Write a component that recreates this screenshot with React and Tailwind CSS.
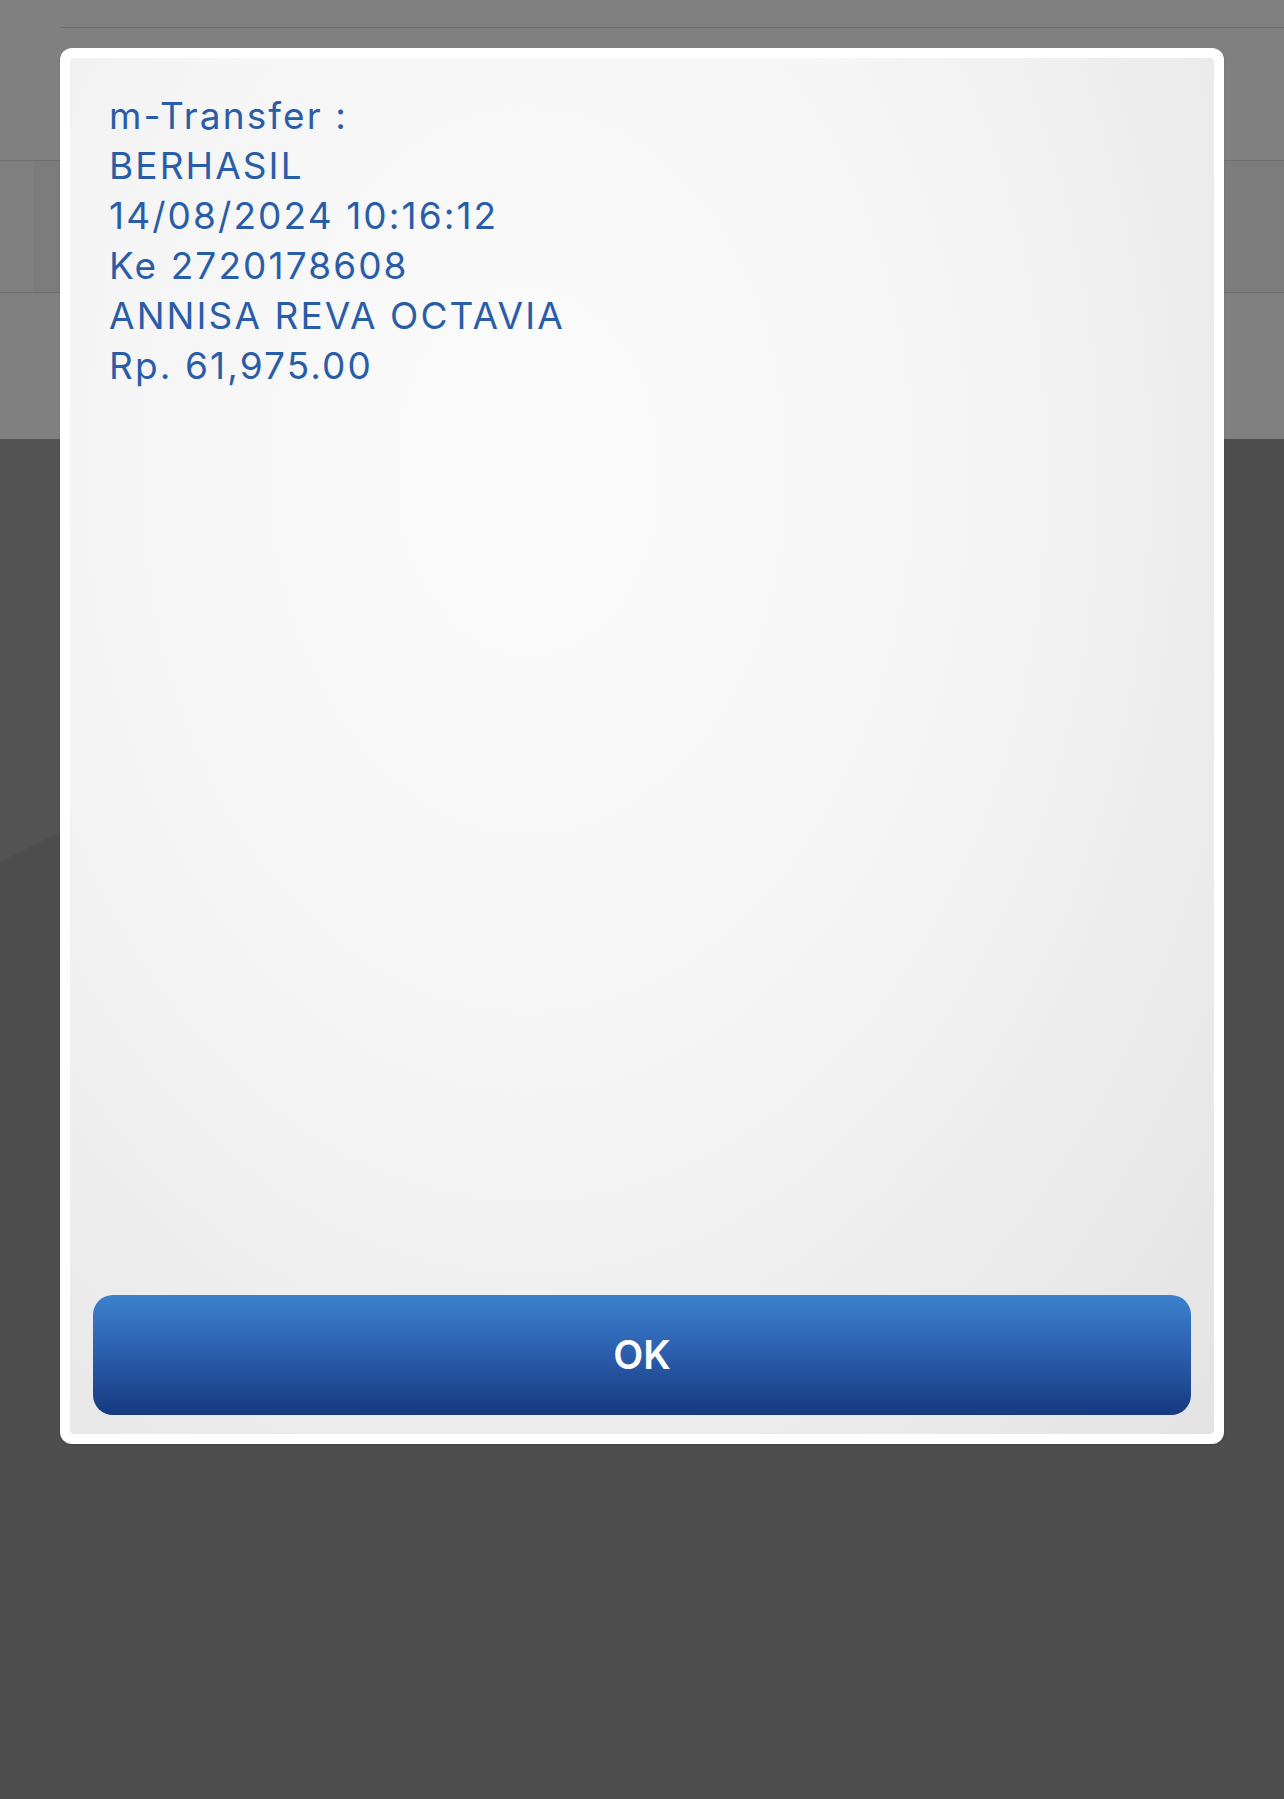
import React from "react";

export default function App() {
  const lines = [
    "m-Transfer :",
    "BERHASIL",
    "14/08/2024 10:16:12",
    "Ke 2720178608",
    "ANNISA REVA OCTAVIA",
    "Rp. 61,975.00",
  ];
  return (
    <div
      className="relative w-[1284px] h-[1799px] overflow-hidden bg-[#4e4e4e]"
      style={{ fontFamily: "Inter, 'Noto Sans', sans-serif" }}
    >
      {/* dimmed page behind the alert */}
      <div className="h-[439px] bg-[#808080] flex flex-col">
        <div className="ml-[60px] mt-[27px] h-px bg-[#6c6c6c]" />
        <div className="mt-[132px] h-[133px] border-y border-[#6e6e6e]">
          <div className="ml-[33px] h-full bg-[#7c7c7c]" />
        </div>
      </div>
      <div className="relative h-[1360px]">
        <svg
          className="absolute inset-0"
          width="1284"
          height="1360"
          viewBox="0 0 1284 1360"
        >
          <polygon points="0,0 846,0 0,423" fill="#535353" />
        </svg>
      </div>

      {/* alert */}
      <div className="absolute left-[60px] top-[48px] w-[1164px] h-[1396px] rounded-[12px] bg-white p-[10px] shadow-[0_1px_2px_rgba(0,0,0,0.15)]">
        <div className="flex h-full flex-col rounded-[4px] bg-[radial-gradient(ellipse_at_40%_30%,#fbfbfb_0%,#f5f5f5_45%,#e3e3e3_100%)]">
          <div className="pl-[39px] pt-[33px] text-[37px] leading-[50px] tracking-[2.1px] text-[#2a5da8]">
            {lines.map((l) => (
              <div key={l}>{l}</div>
            ))}
          </div>
          <div className="flex-1" />
          <button className="mx-[23px] mb-[19px] h-[120px] rounded-[20px] bg-[linear-gradient(to_bottom,#3c82ce_0%,#2c61b0_45%,#17397f_100%)] text-[39px] font-semibold text-white">
            OK
          </button>
        </div>
      </div>
    </div>
  );
}
